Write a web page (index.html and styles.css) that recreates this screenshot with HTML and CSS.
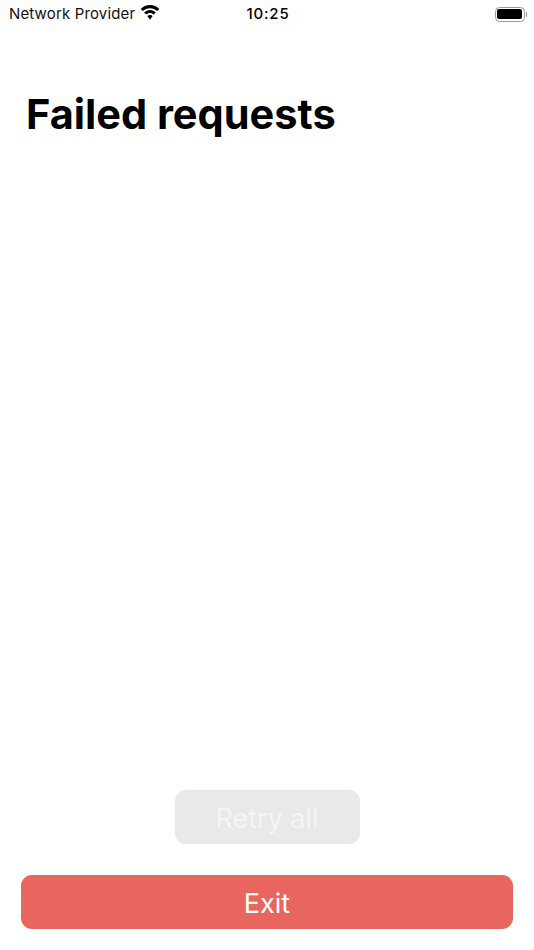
FILE: index.html
```html
<!DOCTYPE html>
<html lang="en">
<head>
<meta charset="utf-8">
<title>Failed requests</title>
<link rel="stylesheet" href="styles.css">
</head>
<body>
<div class="screen">
  <header class="status">
    <div class="status-left">
      <span class="carrier">Network Provider</span>
      <svg class="wifi" viewBox="0 0 20 15" width="20" height="15" aria-hidden="true">
        <path d="M10 3.200c2.800 0 5.300 1.100 7.200 2.900L19.300 4C16.800 1.500 13.600 0 10 0S3.200 1.500.7 4l2.100 2.100C4.700 4.300 7.200 3.200 10 3.200z"/>
        <path d="M10 8c1.500 0 2.800.6 3.800 1.500l2.100-2.100C14.300 5.900 12.300 5 10 5S5.700 5.900 4.100 7.400l2.100 2.100C7.200 8.600 8.500 8 10 8z"/>
        <path d="M10 10c-1 0-1.900.4-2.600 1L10 14.800l2.600-3.800c-.7-.6-1.600-1-2.600-1z"/>
      </svg>
    </div>
    <span class="time">10:25</span>
    <div class="battery" aria-hidden="true"><span class="battery-shell"><span class="battery-fill"></span></span><span class="battery-cap"></span></div>
  </header>
  <h1 class="title">Failed requests</h1>
  <main class="list"></main>
  <footer class="actions">
    <button class="btn retry" type="button">Retry all</button>
    <button class="btn exit" type="button">Exit</button>
  </footer>
</div>
</body>
</html>
```
FILE: styles.css
```css
* { box-sizing: border-box; }
html, body { margin: 0; padding: 0; background: #fff; }
.screen {
  width: 534px;
  height: 950px;
  display: flex;
  flex-direction: column;
  font-family: Inter, "Liberation Sans", sans-serif;
  color: #000;
  overflow: hidden;
}
.status {
  height: 28px;
  flex: none;
  display: grid;
  grid-template-columns: 1fr auto 1fr;
  align-items: center;
  padding: 0 7px 0 9px;
}
.status-left { display: flex; align-items: center; gap: 5px; }
.carrier { font-size: 15px; line-height: 28px; letter-spacing: 0.15px; color: #111; }
.wifi { fill: #000; margin-top: -4px; }
.time { font-size: 15px; font-weight: 500; line-height: 28px; letter-spacing: 0.8px; }
.battery { justify-self: end; display: flex; align-items: center; gap: 1px; }
.battery-shell {
  width: 30px;
  height: 15px;
  border: 1px solid #9a9a9a;
  border-radius: 4.500px;
  padding: 1.500px;
  display: flex;
}
.battery-fill { flex: 1; background: #000; border-radius: 2px; }
.battery-cap { width: 1.500px; height: 5px; background: #9a9a9a; border-radius: 0 1px 1px 0; }
.title {
  margin: 60px 0 0 26px;
  font-size: 41.500px;
  line-height: 52px;
  font-weight: 700;
}
.list { flex: 1; }
.actions {
  flex: none;
  display: flex;
  flex-direction: column;
  align-items: center;
  padding: 0 21px 21px;
  gap: 31px;
}
.btn {
  border: 0;
  height: 54px;
  border-radius: 11px;
  font-family: inherit;
  font-size: 27px;
  font-weight: 400;
  padding: 2px 0 0;
}
.retry { width: 185px; background: #e9e9eb; color: #f5f5f6; }
.exit { width: 100%; background: #e9665e; color: #fff; }
```
